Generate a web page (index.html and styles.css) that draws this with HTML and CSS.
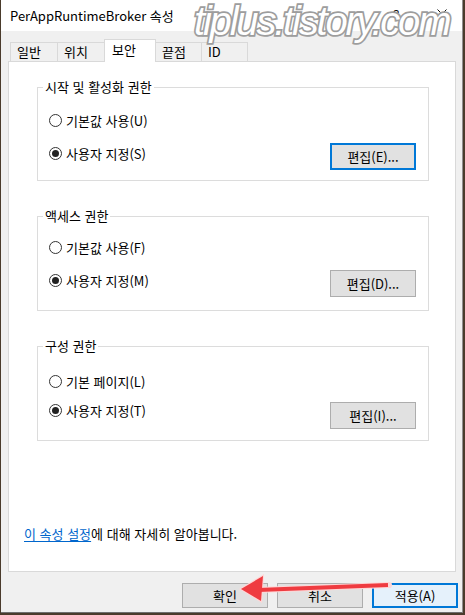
FILE: index.html
```html
<!DOCTYPE html>
<html lang="ko">
<head>
<meta charset="utf-8">
<title>PerAppRuntimeBroker 속성</title>
<link rel="stylesheet" href="styles.css">
</head>
<body>
<div class="window">
  <header class="titlebar">
    <span class="title">PerAppRuntimeBroker 속성</span>
    <span class="help">?</span>
    <svg class="close" width="10" height="10" viewBox="0 0 10 10"><path d="M0.5 0.5L9.5 9.5M9.5 0.5L0.5 9.5" stroke="#111" stroke-width="1" fill="none"/></svg>
  </header>
  <main class="content">
    <nav class="tabs">
      <span class="tab w48">일반</span>
      <span class="tab w48">위치</span>
      <span class="tab sel">보안</span>
      <span class="tab w47">끝점</span>
      <span class="tab w47">ID</span>
    </nav>
    <section class="panel">
      <fieldset class="group g1">
        <legend>시작 및 활성화 권한</legend>
        <div class="gbody">
          <div class="row"><span class="radio"></span><span>기본값 사용(U)</span></div>
          <div class="row-btn">
            <div class="row"><span class="radio on"></span><span>사용자 지정(S)</span></div>
            <button class="btn focus">편집(E)...</button>
          </div>
        </div>
      </fieldset>
      <fieldset class="group g2">
        <legend>액세스 권한</legend>
        <div class="gbody">
          <div class="row"><span class="radio"></span><span>기본값 사용(F)</span></div>
          <div class="row-btn">
            <div class="row"><span class="radio on"></span><span>사용자 지정(M)</span></div>
            <button class="btn">편집(D)...</button>
          </div>
        </div>
      </fieldset>
      <fieldset class="group g3">
        <legend>구성 권한</legend>
        <div class="gbody">
          <div class="row"><span class="radio"></span><span>기본 페이지(L)</span></div>
          <div class="row-btn">
            <div class="row"><span class="radio on"></span><span>사용자 지정(T)</span></div>
            <button class="btn">편집(I)...</button>
          </div>
        </div>
      </fieldset>
      <p class="info"><a class="link">이 속성 설정</a>에 대해 자세히 알아봅니다.</p>
    </section>
    <footer class="actions">
      <button class="btn act">확인</button>
      <button class="btn act">취소</button>
      <button class="btn act default">적용(A)</button>
    </footer>
  </main>
</div>
<div class="watermark">tiplus.tistory.com</div>
<svg class="arrow" width="465" height="615" viewBox="0 0 465 615">
  <line x1="258" y1="590" x2="389" y2="585" stroke="#ffd6d6" stroke-width="6" stroke-linecap="round"/>
  <polygon points="239,589 264,574 262,603" fill="#ffd6d6"/>
  <line x1="258" y1="590" x2="388" y2="585" stroke="#ef3b40" stroke-width="4"/>
  <polygon points="241,589 263,576 261,601" fill="#ef3b40"/>
</svg>
</body>
</html>
```
FILE: styles.css
```css
html, body {
  margin: 0;
  padding: 0;
}
body {
  width: 465px;
  height: 615px;
  overflow: hidden;
  background: #4a3b2c;
  font-family: "Noto Sans CJK KR", sans-serif;
  font-size: 13px;
  color: #000;
}
.window {
  position: relative;
  margin-left: 1px;
  width: 461px;
  height: 612px;
  background: #f0f0f0;
  border-right: 1px solid #8f8f8f;
  border-bottom: 1px solid #6f6f6f;
  display: flex;
  flex-direction: column;
}
.titlebar {
  height: 31px;
  flex: none;
  background: #fff;
  display: flex;
  align-items: center;
  padding: 0 15px 0 9px;
  line-height: 18px;
}
.title {
  flex: 1;
  padding-top: 1px;
}
.help {
  font-family: "Liberation Sans", sans-serif;
  font-size: 11px;
  margin-top: -3px;
}
.close {
  margin-left: 38px;
  margin-top: -3px;
}
.content {
  flex: 1;
  display: flex;
  flex-direction: column;
  padding: 8px 4px 0 7px;
}
.tabs {
  height: 22px;
  display: flex;
  align-items: flex-end;
  padding-left: 2px;
}
.tab {
  box-sizing: border-box;
  height: 19px;
  border: 1px solid #d9d9d9;
  border-bottom: none;
  background: #f0f0f0;
  padding-left: 6px;
  line-height: 18px;
  margin-left: -1px;
}
.tab:first-child { margin-left: 0; }
.w48 { width: 48px; }
.w47 { width: 47px; }
.tab.sel {
  width: 52px;
  height: 23px;
  margin-bottom: -1px;
  background: #fff;
  position: relative;
  z-index: 1;
  padding-left: 7px;
  line-height: 19px;
}
.panel {
  box-sizing: border-box;
  width: 448px;
  height: 511px;
  background: #fff;
  border: 1px solid #d9d9d9;
  padding: 17px 26px 29px 15px;
  display: flex;
  flex-direction: column;
}
.group {
  margin: 0 0 0 13px;
  padding: 0;
  border: 1px solid #dcdcdc;
  min-width: 0;
}
.group legend {
  margin-left: 5px;
  padding: 0 2px;
  line-height: 16px;
}
.g2, .g3 { margin-top: 27px; }
.gbody {
  padding: 15px 12px 10px 11px;
}
.g2 .gbody { padding-top: 13px; padding-bottom: 13px; }
.g3 .gbody { padding-top: 17px; padding-bottom: 11px; }
.row {
  height: 20px;
  display: flex;
  align-items: center;
  gap: 4px;
}
.row-btn {
  display: flex;
  justify-content: space-between;
  align-items: flex-start;
  margin-top: 13px;
}
.g3 .row-btn { margin-top: 9px; }
.g3 .row-btn .btn { margin-top: 2px; }
.radio {
  box-sizing: border-box;
  width: 13px;
  height: 13px;
  border: 1px solid #333;
  border-radius: 50%;
  background: #fff;
  display: flex;
  align-items: center;
  justify-content: center;
  flex: none;
}
.radio.on::after {
  content: "";
  width: 7px;
  height: 7px;
  border-radius: 50%;
  background: #222;
}
.btn {
  box-sizing: border-box;
  width: 86px;
  height: 27px;
  border: 1px solid #adadad;
  background: #e1e1e1;
  font: inherit;
  color: #000;
  padding: 0;
  margin: 0;
}
.btn.focus {
  border: 2px solid #0078d7;
}
.info {
  margin: auto 0 0 0;
  line-height: 16px;
}
.link {
  color: #0066cc;
  text-decoration: underline;
  text-underline-offset: 2px;
}
.actions {
  display: flex;
  justify-content: flex-end;
  gap: 9px;
  margin-top: 11px;
}
.btn.act {
  height: 25px;
}
.btn.default {
  background: #e5f1fb;
  border: 2px solid #0078d7;
}
.watermark {
  position: absolute;
  left: 194px;
  top: 1px;
  font-family: "Liberation Sans", sans-serif;
  font-style: italic;
  font-size: 40px;
  line-height: 40px;
  letter-spacing: -2.2px;
  color: #fff;
  -webkit-text-stroke: 3.5px #9d9d9d;
  paint-order: stroke fill;
  white-space: nowrap;
}
.arrow {
  position: absolute;
  left: 0;
  top: 0;
  pointer-events: none;
}
```
